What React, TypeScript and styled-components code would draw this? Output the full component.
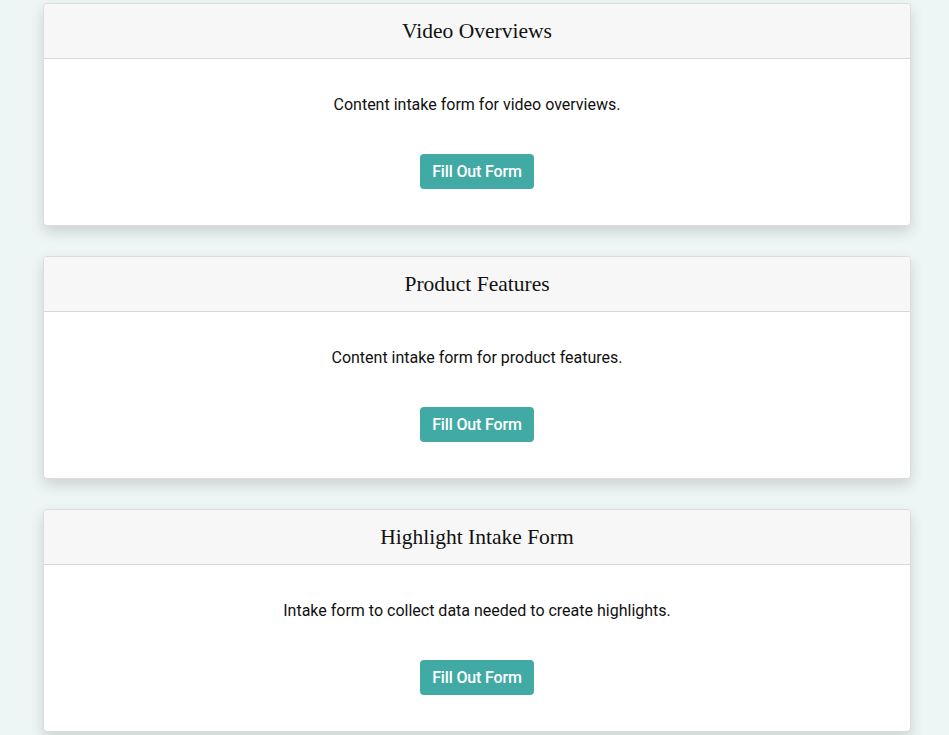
import React from "react";
import styled, { createGlobalStyle } from "styled-components";

const Global = createGlobalStyle`
  html, body { margin: 0; padding: 0; background: #edf6f5; }
  body { font-family: Roboto, "Liberation Sans", sans-serif; }
`;

const Page = styled.div`
  display: flex;
  flex-direction: column;
  gap: 30px;
  padding: 3px 38px 40px 43px;
`;

const Card = styled.section`
  background: #fff;
  border: 1px solid #dcdcdc;
  border-radius: 4px;
  box-shadow: 0 6px 14px rgba(0, 0, 0, 0.14);
  overflow: hidden;
`;

const Header = styled.div`
  background: #f7f7f7;
  border-bottom: 1px solid #d8d8d8;
  height: 54px;
  display: flex;
  align-items: center;
  justify-content: center;
`;

const Title = styled.h2`
  margin: 0;
  font-family: "Liberation Serif", serif;
  font-weight: 400;
  font-size: 21.5px;
  color: #111;
`;

const Body = styled.div`
  display: flex;
  flex-direction: column;
  align-items: center;
  padding: 34px 20px 36px;
`;

const Text = styled.p`
  margin: 0 0 37px;
  font-size: 16px;
  line-height: 24px;
  color: #111;
`;

const Button = styled.button`
  background: #42aaa4;
  color: #fff;
  border: none;
  border-radius: 4px;
  height: 35px;
  padding: 0 12px;
  font-family: Roboto, sans-serif;
  font-size: 16px;
  font-weight: 500;
  letter-spacing: -0.15px;
  cursor: pointer;
`;

const cards = [
  { title: "Video Overviews", text: "Content intake form for video overviews." },
  { title: "Product Features", text: "Content intake form for product features." },
  { title: "Highlight Intake Form", text: "Intake form to collect data needed to create highlights." },
];

export default function App() {
  return (
    <>
      <Global />
      <Page>
        {cards.map((c) => (
          <Card key={c.title}>
            <Header>
              <Title>{c.title}</Title>
            </Header>
            <Body>
              <Text>{c.text}</Text>
              <Button>Fill Out Form</Button>
            </Body>
          </Card>
        ))}
      </Page>
    </>
  );
}
